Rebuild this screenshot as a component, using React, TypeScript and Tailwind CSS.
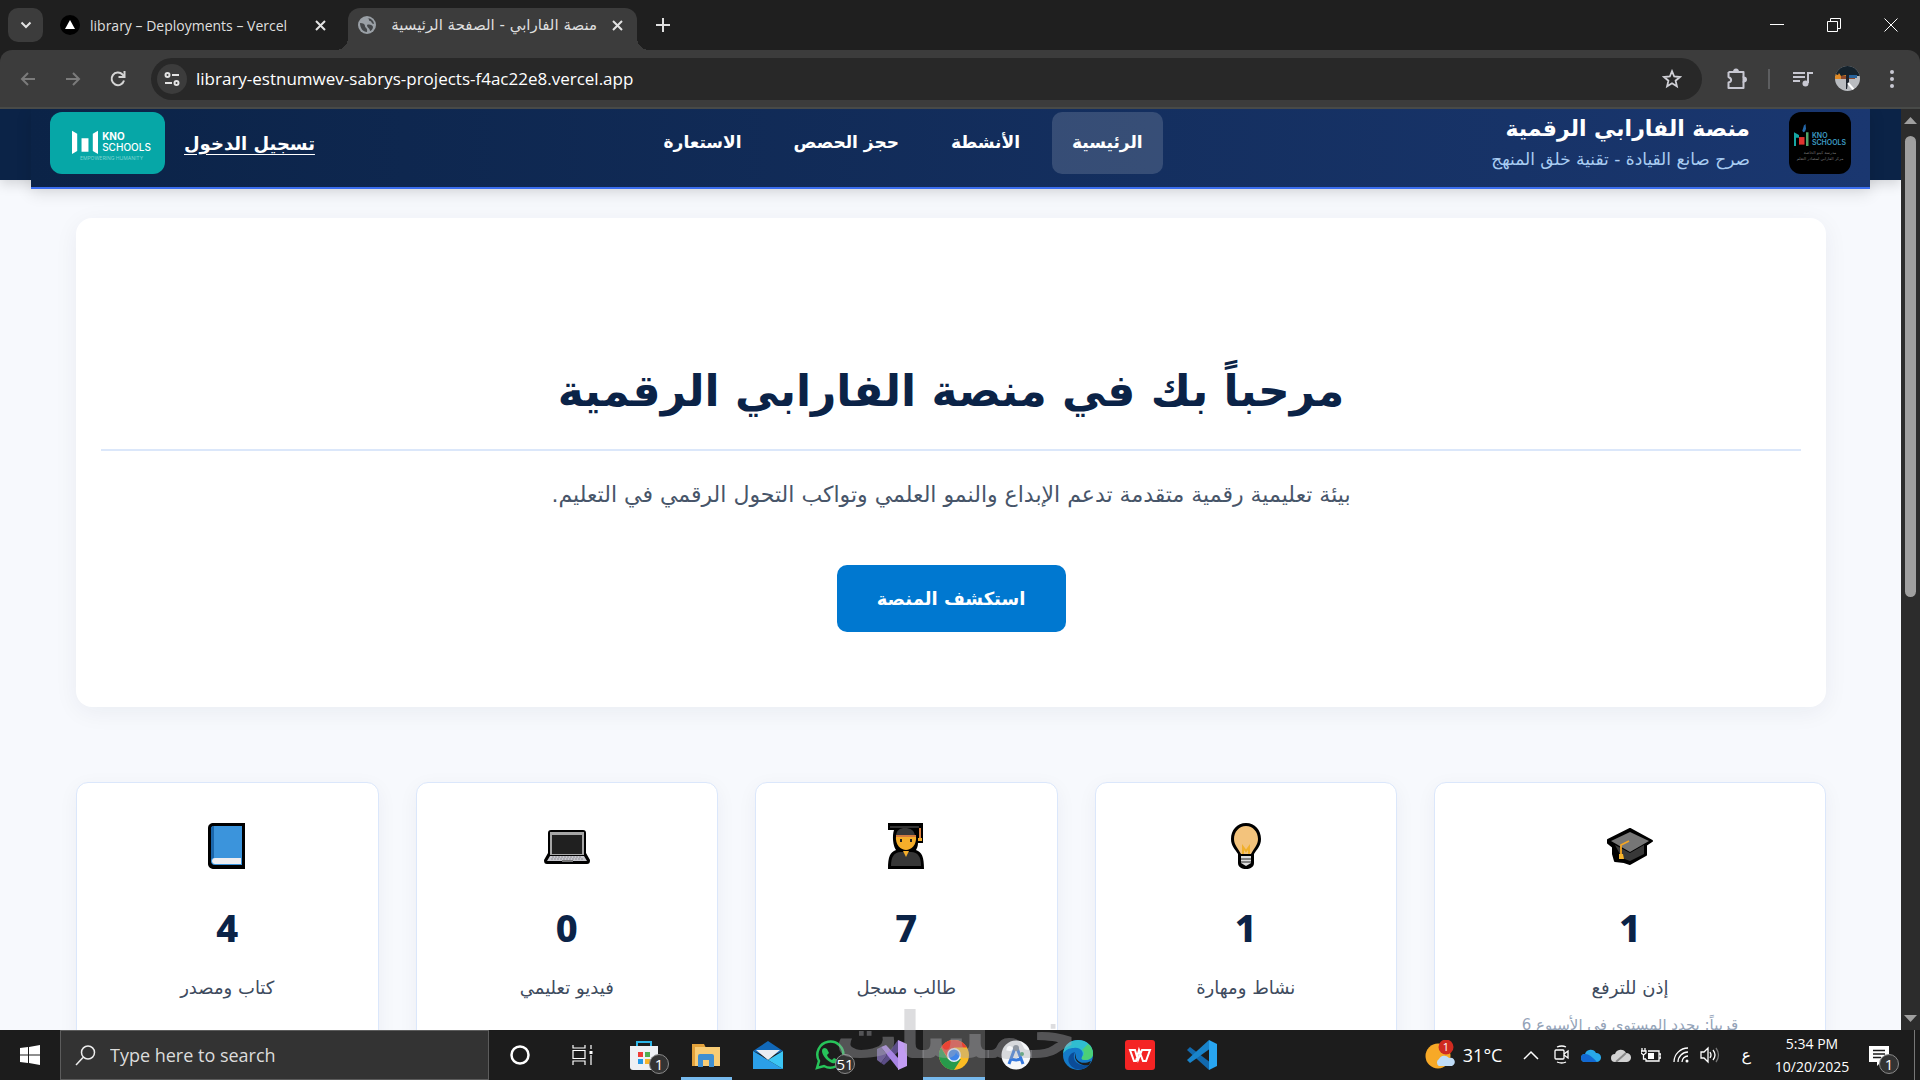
import type { ReactNode } from "react";
import clsx from "clsx";

const ui = "font-['Open_Sans','Noto_Sans',sans-serif]";

function KnoMark({ color = false }: { color?: boolean }) {
    return (
        <svg viewBox="0 0 30 32" className={color ? "h-[22px] w-[15px]" : "h-[24px] w-[26px]"} preserveAspectRatio="none" aria-hidden="true">
            {color && <path d="M17 9l3-7 3-2 1 7-2 4-4 1z" fill="#2467a9" />}
            <path d={color ? "M0 12l10 4v4H4v12H0z" : "M0 1l6 4v23l-6 4z"} fill={color ? "#16a6a3" : "#fff"} />
            <path d={color ? "M10 19h11v11H10z" : "M11 11h8v18h-8z"} fill={color ? "#e0332e" : "#fff"} />
            <path d={color ? "M24 12h5v20h-5z" : "M30 1l-6 4v23l6 4z"} fill={color ? "#51a36b" : "#fff"} />
        </svg>
    );
}

function CloseX() {
    return <svg width="11" height="11" viewBox="0 0 11 11" stroke="#e3e3e3" strokeWidth="2"><path d="M1 1l9 9M10 1l-9 9" /></svg>;
}

function TabBar() {
    return (
        <div className="flex h-[50px] shrink-0 items-start bg-[#1f1f1f] pt-2 pl-2 text-[#dfdfdf]">
            <button aria-label="Search tabs" className="grid h-[34px] w-[35px] place-items-center rounded-[10px] bg-[#3c3c3c]">
                <svg width="12" height="8" viewBox="0 0 12 8" fill="none" stroke="#e3e3e3" strokeWidth="2"><path d="M1.500 1.500L6 6l4.500-4.500" /></svg>
            </button>
            <div className="flex h-[34px] w-[305px] items-center pl-[17px]">
                <svg width="20" height="20" viewBox="0 0 20 20" className="shrink-0"><circle cx="10" cy="10" r="10" /><path d="M10 5l5 9H5z" fill="#fff" /></svg>
                <span className="ml-2.5 w-[225px] text-[14px] whitespace-nowrap">library – Deployments – Vercel</span>
                <button aria-label="Close tab"><CloseX /></button>
            </div>
            <div className="relative flex h-[42px] w-[289px] items-center rounded-t-xl bg-[#3c3c3c] px-2.5 pb-2">
                <span className="absolute bottom-0 -left-3 size-3 bg-[radial-gradient(circle_at_0_0,#1f1f1f_12px,#3c3c3c_12px)]" />
                <span className="absolute -right-3 bottom-0 size-3 bg-[radial-gradient(circle_at_100%_0,#1f1f1f_12px,#3c3c3c_12px)]" />
                <svg width="18" height="18" viewBox="0 0 18 18" className="shrink-0">
                    <circle cx="9" cy="9" r="9" fill="#9aa0a6" />
                    <path d="M2 7c3 0 5 1 5 3s3 2 2 6c-4 0-7-4-7-9zM9 2c3 0 1 3 3 3s1 3 4 3c0-3-3-6-7-6zM9 9c2-1 6 0 6 2s-2 4-3 4c0-3-3-3-3-6z" fill="#44474a" />
                </svg>
                <span dir="rtl" className="ml-5 w-[201px] text-center font-['DejaVu_Sans',sans-serif] text-[15px] whitespace-nowrap">منصة الفارابي - الصفحة الرئيسية</span>
                <button aria-label="Close tab" className="ml-auto pr-1"><CloseX /></button>
            </div>
            <button aria-label="New tab" className="mt-2.5 ml-[19px]">
                <svg width="14" height="14" viewBox="0 0 14 14" stroke="#dfdfdf" strokeWidth="2"><path d="M7 0v14M0 7h14" /></svg>
            </button>
            <div className="ml-auto flex items-center gap-[43px] pt-2.5 pr-[22px]">
                <button aria-label="Minimize"><svg width="14" height="14" viewBox="0 0 14 14" stroke="#fff"><path d="M0 6.500h14" /></svg></button>
                <button aria-label="Restore"><svg width="14" height="14" viewBox="0 0 14 14" fill="none" stroke="#fff"><path d="M.5 3.500h10v10H.5zM3.500 3V.5h10v10H11" /></svg></button>
                <button aria-label="Close"><svg width="14" height="14" viewBox="0 0 14 14" stroke="#fff"><path d="M.5.5l13 13M13.500.5l-13 13" /></svg></button>
            </div>
        </div>
    );
}

function Toolbar() {
    return (
        <div className="flex h-[59px] shrink-0 items-center rounded-t-xl border-b-2 border-[#484a48] bg-[#3c3c3c] text-[#c7c7c7]">
            <div className="flex w-[151px] shrink-0 items-center gap-[29px] pl-5">
                <button aria-label="Back"><svg width="16" height="16" viewBox="0 0 16 16" fill="none" stroke="#7b7b7b" strokeWidth="2"><path d="M15 8H2M8 2L2 8l6 6" /></svg></button>
                <button aria-label="Forward"><svg width="16" height="16" viewBox="0 0 16 16" fill="none" stroke="#7b7b7b" strokeWidth="2"><path d="M1 8h13M8 2l6 6-6 6" /></svg></button>
                <button aria-label="Reload"><svg width="16" height="16" viewBox="0 0 16 16" fill="none" stroke="#d5d5d5" strokeWidth="2"><path d="M14 9.500A6.300 6.300 0 1 1 12.500 3.500L14 5" /><path d="M14.500 0v6h-6" /></svg></button>
            </div>
            <div className="flex h-[42px] flex-1 items-center rounded-full bg-[#282828] px-1.5">
                <button aria-label="Site information" className="grid size-[30px] shrink-0 place-items-center rounded-full bg-[#3c3c3c]">
                    <svg width="16" height="14" viewBox="0 0 16 14" fill="none" stroke="#e3e3e3" strokeWidth="2"><circle cx="3.500" cy="3" r="2" /><path d="M8 3h7M1 11h7" /><circle cx="12.500" cy="11" r="2" /></svg>
                </button>
                <input aria-label="Address" readOnly value="library-estnumwev-sabrys-projects-f4ac22e8.vercel.app" className="ml-[9px] min-w-0 flex-1 bg-transparent text-[17px] text-white outline-none" />
                <button aria-label="Bookmark" className="mr-[14px]">
                    <svg width="20" height="20" viewBox="0 0 20 20" fill="none" stroke="#d0d0d6" strokeWidth="1.800"><path d="M10 2.200l2.200 5.300 5.700.5-4.300 3.700 1.300 5.600L10 14.300l-4.900 3 1.300-5.600L2.100 8l5.700-.5z" /></svg>
                </button>
            </div>
            <div className="flex shrink-0 items-center pr-[26px] pl-[24px]">
                <button aria-label="Extensions">
                    <svg width="22" height="22" viewBox="0 0 22 22" fill="none" stroke="#c8c8d2" strokeWidth="2"><path d="M2.500 4h5.500M12 4h5.500v5.500M17.500 13.500V20h-15v-5.500c3.500-1 3.500-4 0-5.500V4" strokeLinejoin="round" /><path d="M8 4a2 2.500 0 0 1 4 0zM17.500 9.500a2.500 2 0 0 1 0 4z" fill="#c8c8d2" /></svg>
                </button>
                <span className="mr-[23px] ml-[20px] h-5 w-0.5 bg-[#5d5e60]" />
                <button aria-label="Media controls">
                    <svg width="20" height="16" viewBox="0 0 20 16" fill="none" stroke="#c8c8d2" strokeWidth="2"><path d="M0 2h12M0 6h12M0 10h7M15 12V2h5" /><circle cx="12.500" cy="12.500" r="3" fill="#c8c8d2" stroke="none" /></svg>
                </button>
                <button aria-label="Profile" className="mr-[30px] ml-[22px]">
                    <svg width="25" height="25" viewBox="0 0 25 25">
                        <clipPath id="face"><circle cx="12.500" cy="12.500" r="12.500" /></clipPath>
                        <g clipPath="url(#face)">
                            <path d="M0 0h25v25H0z" fill="#b9bcc0" /><path d="M0 0h25v10H0z" fill="#14222c" />
                            <path d="M0 13V8l3 1 1-2 2 3 5-1 3 1-2 3z" fill="#e08a26" /><path d="M6 10h14v3H6z" fill="#8d4a2c" /><path d="M14 9h8v3h-8z" fill="#28649c" />
                            <path d="M11 9h3v8h-1l-1 6h-1z" fill="#1c232c" /><path d="M13 17l6 7" stroke="#fff" strokeWidth="2" />
                        </g>
                    </svg>
                </button>
                <button aria-label="Menu">
                    <svg width="4" height="18" viewBox="0 0 4 18" fill="#c8c8d2"><circle cx="2" cy="2" r="2" /><circle cx="2" cy="9" r="2" /><circle cx="2" cy="16" r="2" /></svg>
                </button>
            </div>
        </div>
    );
}

const nav = ["الرئيسية", "الأنشطة", "حجز الحصص", "الاستعارة"];

function SiteHeader() {
    return (
        <header className="relative z-10 h-[71px] bg-[#0b2347] px-[31px] shadow-[0_4px_12px_rgba(0,0,0,0.15)]">
            <div className="flex h-20 items-center justify-between border-b-2 border-[#3b6ef0] bg-linear-to-r from-[#0b2347] to-[#1a3770] px-[19px] pb-2.5 shadow-[0_4px_15px_rgba(0,0,0,0.12)]">
                <div className="flex items-center gap-[39px]">
                    <div className="flex h-[62px] w-[62px] flex-col items-center justify-center rounded-xl bg-black">
                        <div className="flex items-end gap-[3px]" dir="ltr">
                            <KnoMark color />
                            <div className="font-['Inter',sans-serif] text-[7px] leading-[7px] font-semibold text-[#3d9cc4]">KNO<br />SCHOOLS</div>
                        </div>
                        <div className="mt-1 text-center text-[4px] leading-[6px] text-[#777]">مدرسة كينو الخاصة<br />مركز الفارابي لمصادر التعلم</div>
                    </div>
                    <div>
                        <div className="text-[22px] leading-[32px] font-bold">منصة الفارابي الرقمية</div>
                        <div className="text-[17px] leading-[28px] text-[#a9cdf2]">صرح صانع القيادة - تقنية خلق المنهج</div>
                    </div>
                </div>
                <nav className="flex gap-3 text-[17px] font-bold">
                    {nav.map((item, i) => (
                        <a key={item} href="#" className={clsx("flex h-[62px] items-center rounded-[10px] px-5", i === 0 && "bg-white/15")}>{item}</a>
                    ))}
                </nav>
                <div className="flex items-center gap-[19px]">
                    <a href="#" className="text-[18px] font-bold underline underline-offset-4">تسجيل الدخول</a>
                    <div dir="ltr" className="flex h-[62px] w-[115px] flex-col items-center justify-center rounded-xl bg-[#06a7a7] pt-1.5 pl-2">
                        <div className="flex items-center gap-1">
                            <KnoMark />
                            <div className="font-['Inter',sans-serif] text-[10px] leading-[11px] font-bold">KNO<br /><span className="font-medium">SCHOOLS</span></div>
                        </div>
                        <div className="font-['Inter',sans-serif] text-[5px] leading-[8px] text-[#7ad3cf]">EMPOWERING HUMANITY</div>
                    </div>
                </div>
            </div>
        </header>
    );
}

function Cap() {
    return (
        <svg width="46" height="46" viewBox="0 0 46 46">
            <path d="M23 6L1 17v3l5 4v7l2 7 9 1 6 2 16-9V22l6-4z" stroke="#000" strokeWidth="2" strokeLinejoin="round" />
            <path d="M8 22l15 8 14-8v9l-14 7-8-3z" fill="#383838" /><path d="M23 9l19 9-19 11L4 18z" fill="#767676" />
            <path d="M22 18l-8 4v10" fill="none" stroke="#f5a623" strokeWidth="1.800" /><path d="M12 31h4l1 5h-5z" fill="#f7b52c" />
        </svg>
    );
}

function Bulb() {
    return (
        <svg width="46" height="46" viewBox="0 0 46 46">
            <path d="M23 0c-9 0-15 7-15 16 0 7 4 10 7 15v9c0 4 4 6 8 6s8-2 8-6v-9c3-5 7-8 7-15C38 7 32 0 23 0z" />
            <path d="M23 3c-7 0-12 6-12 13 0 6 4 9 7 15h10c3-6 7-9 7-15C35 9 30 3 23 3z" fill="#f3c37c" />
            <path d="M20 31v-7l3 4 3-4v7" fill="none" stroke="#f0b02c" strokeWidth="2" /><path d="M18 33h10v7l-5 3-5-3z" fill="#ddd" /><path d="M18 36h10M18 39h10" stroke="#222" />
        </svg>
    );
}

function Graduate() {
    return (
        <svg width="46" height="46" viewBox="0 0 46 46">
            <path d="M5 0h35v20h-5c0 3-1 5-2 7 6 2 8 7 8 19H5c0-12 2-17 8-19-3-4-4-14-2-20H5z" />
            <path d="M7 3h29v2H7z" fill="#333" /><path d="M13 14c0-7 4-9 9-9s10 2 10 9z" fill="#383838" />
            <path d="M13 13h20c1 9-5 14-10 14s-11-5-10-14z" fill="#f5ae2a" /><path d="M13 13h20" stroke="#d27a40" strokeWidth="2" />
            <path d="M18 16v3M28 16v3" stroke="#222" strokeWidth="2" /><path d="M8 43c0-9 3-14 10-14h10c7 0 10 5 10 14z" fill="#363636" />
            <path d="M20 28h6l-3 6z" fill="#f5ae2a" /><path d="M37 5v12" stroke="#e0813e" strokeWidth="2" /><path d="M35 15h4v3h-4z" fill="#f5ae2a" />
        </svg>
    );
}

function Laptop() {
    return (
        <svg width="46" height="46" viewBox="0 0 46 46">
            <path d="M7 7h32c2 0 3 1 3 3v20l4 7c0 3-1 4-3 4H3c-2 0-3-1-3-4l4-7V10c0-2 1-3 3-3z" />
            <path d="M6 9h34v23H6z" fill="#a6a6a6" /><path d="M8 12h30v19H8z" fill="#202020" />
            <path d="M6 33h34l3 5H3z" fill="#c7c7cd" /><path d="M8 34h30M7 36h32" stroke="#8e8e95" strokeDasharray="2 1" /><path d="M18 38h11" stroke="#777" strokeWidth="2" />
        </svg>
    );
}

function Book() {
    return (
        <svg width="46" height="46" viewBox="0 0 46 46">
            <path d="M10 0h31v46H10c-3 0-6-2-6-5V5c0-3 2-5 6-5z" /><path d="M10 3h28v39H11c-3 0-4-2-4-4V6c0-2 1-3 3-3z" fill="#3b94dc" />
            <path d="M10 3v32c-2 0-3 1-3 3V6c0-2 1-3 3-3z" fill="#1b66ab" /><path d="M11 35h26v6H11c-4 0-4-6 0-6z" fill="#ededf0" />
        </svg>
    );
}

const stats: { icon: ReactNode; value: string; label: string; note?: string }[] = [
    { icon: <Cap />, value: "1", label: "إذن للترفع", note: "قريباً: يحدد المستوى في الأسبوع 6" },
    { icon: <Bulb />, value: "1", label: "نشاط ومهارة" },
    { icon: <Graduate />, value: "7", label: "طالب مسجل" },
    { icon: <Laptop />, value: "0", label: "فيديو تعليمي" },
    { icon: <Book />, value: "4", label: "كتاب ومصدر" },
];

function SitePage() {
    return (
        <div dir="rtl" className="min-w-0 flex-1 overflow-hidden bg-[#f7f9fd] font-['DejaVu_Sans',sans-serif] text-white">
            <SiteHeader />
            <main className="pt-[38px] pr-[75px] pl-[76px]">
                <section className="rounded-2xl bg-white px-[25px] pt-[130px] pb-[75px] text-center shadow-[0_5px_25px_rgba(10,35,71,0.06)]">
                    <h1 className="h-[103px] border-b-2 border-[#dbe7fa] text-[44px] leading-[86px] font-bold text-[#0b2347]">مرحباً بك في منصة الفارابي الرقمية</h1>
                    <p className="mt-6 text-[22px] leading-[40px] text-[#475569]">بيئة تعليمية رقمية متقدمة تدعم الإبداع والنمو العلمي وتواكب التحول الرقمي في التعليم.</p>
                    <button className="mt-[50px] h-[67px] w-[229px] rounded-[10px] bg-[#0078d0] text-[18px] font-bold">استكشف المنصة</button>
                </section>
                <section className="mt-[75px] grid grid-cols-[392px_repeat(4,minmax(0,1fr))] gap-[37px]">
                    {stats.map((s) => (
                        <article key={s.label} className="flex h-[320px] flex-col items-center rounded-xl border border-[#dbe7fb] bg-white pt-10 text-center shadow-[0_5px_20px_rgba(10,35,71,0.05)]">
                            {s.icon}
                            <div className="mt-7 font-['Noto_Sans',sans-serif] text-[38px] leading-[60px] font-extrabold text-[#0b2347]">{s.value}</div>
                            <div className="mt-4 text-[18px] leading-[30px] text-[#3e4b5e]">{s.label}</div>
                            {s.note && <div className="mt-2 text-[15px] leading-[28px] text-[#94a3b8]">{s.note}</div>}
                        </article>
                    ))}
                </section>
            </main>
        </div>
    );
}

function Scrollbar() {
    return (
        <div className="flex w-[19px] shrink-0 flex-col items-center bg-[#2c2c2c] py-[7px]">
            <svg width="13" height="8" viewBox="0 0 13 8" fill="#9f9f9f"><path d="M0 8l6.500-7L13 8z" /></svg>
            <div className="mt-3 h-[461px] w-[11px] rounded-full bg-[#9f9f9f]" />
            <svg width="13" height="8" viewBox="0 0 13 8" fill="#9f9f9f" className="mt-auto"><path d="M0 0l6.500 7L13 0z" /></svg>
        </div>
    );
}

const apps: { name: string; open?: boolean; active?: boolean; badge?: string; icon: ReactNode }[] = [
    { name: "Cortana", icon: <svg width="20" height="20" viewBox="0 0 20 20"><circle cx="10" cy="10" r="8.500" fill="none" stroke="#fff" strokeWidth="2.500" /></svg> },
    { name: "Task view", icon: <svg width="21" height="20" viewBox="0 0 21 20" fill="none" stroke="#fff" strokeWidth="1.200"><path d="M1 0v3h12V0M1 20v-4h12v4M1 5.500h12v8H1zM19 0v4M19 10v10" /><path d="M17.500 6h3v3h-3z" fill="#fff" stroke="none" /></svg> },
    {
        name: "Microsoft Store", badge: "1", icon: <svg width="30" height="30" viewBox="0 0 30 30"><path d="M8 7V2h14v5" fill="none" stroke="#2cb5e8" strokeWidth="2" /><path d="M1 6h28v21q0 3-3 3H4q-3 0-3-3z" fill="#eef0f4" /><path d="M9 12h5v5H9z" fill="#ef3b36" /><path d="M16 12h5v5h-5z" fill="#51ae50" /><path d="M9 19h5v5H9z" fill="#2298e8" /><path d="M16 19h5v5h-5z" fill="#f6b42a" /></svg>,
    },
    {
        name: "File Explorer", open: true, icon: <svg width="28" height="26" viewBox="0 0 28 26"><path d="M0 2h12l2 4h14v18H0z" fill="#e3a23b" /><path d="M3 5h25v19H3z" fill="#f8cc75" /><path d="M6 14q0-2 2-2h12q2 0 2 2v11h-5v-7h-6v7H6z" fill="#3f8fd2" /></svg>,
    },
    { name: "Mail", icon: <svg width="30" height="28" viewBox="0 0 30 28"><path d="M0 10L15 0l15 10-15 6z" fill="#1168b8" /><path d="M3 9h24L15 19z" fill="#e9edf2" /><path d="M0 10l30 18H0z" fill="#2b9fe8" /><path d="M30 10v18L15 19z" fill="#3bc5f4" /></svg> },
    {
        name: "WhatsApp", badge: "51", icon: <svg width="30" height="30" viewBox="0 0 30 30"><path d="M2 28l2-7A13 13 0 1 1 9 26z" fill="none" stroke="#27c45a" strokeWidth="2.500" /><path d="M10 8l2 1 2 4-2 2c1 3 3 4 5 5l2-2 4 2c0 4-5 4-8 2-5-3-8-8-8-11 0-2 1-3 3-3z" fill="#27c45a" /></svg>,
    },
    { name: "Visual Studio", icon: <svg width="30" height="30" viewBox="0 0 30 30"><path d="M0 9l4-2 6 8-6 8-4-3z" fill="#6f6196" /><path d="M4 23L21 0v12L7 25z" fill="#5b4d86" /><path d="M4 7l5-2 13 14v11z" fill="#a884e4" /><path d="M21 0l9 4v22l-9 4z" fill="#c29cf3" /></svg> },
    {
        name: "Chrome", active: true, icon: <svg width="30" height="30" viewBox="0 0 30 30"><circle cx="15" cy="15" r="15" fill="#fbbc23" /><path d="M2 7.500A15 15 0 0 1 28 7.500H15L9 18z" fill="#ea4335" /><path d="M2 7.500A15 15 0 0 0 15 30l7-11H9z" fill="#279a4b" /><circle cx="15" cy="15" r="7" fill="#e5f0fb" /><circle cx="15" cy="15" r="5.500" fill="#3f86ea" /></svg>,
    },
    { name: "Android Studio", icon: <svg width="30" height="30" viewBox="0 0 30 30"><circle cx="15" cy="15" r="14.500" fill="#f6f8fa" /><path d="M14 8L8 24M16 8l6 16M9 18q6 4 12 0" fill="none" stroke="#3478de" strokeWidth="3" /><circle cx="15" cy="8" r="3" fill="#7e8b98" /><circle cx="21" cy="14" r="2" fill="#42a66b" /></svg> },
    { name: "Edge", icon: <svg width="30" height="30" viewBox="0 0 30 30"><circle cx="15" cy="15" r="15" fill="#147ac9" /><path d="M0 14C1 3 9 0 15 0c9 0 15 6 15 13 0 5-4 7-8 7-3 0-4-1-3-3 3-5-2-10-8-9C6 8 2 10 0 14z" fill="#30bed0" /><path d="M25 4c4 3 5 7 5 10 0 4-4 6-8 6-3 0-4-1-3-3 3-3 2-6 0-7z" fill="#4bd078" /><path d="M12 12c-4 7 2 15 14 13-8 8-17 4-20-2-2-5 1-10 6-11z" fill="#0b4c98" /><path d="M13 13c-2 7 5 13 15 8l-2 4C18 27 9 20 13 13z" fill="#1c1c1c" /></svg> },
    { name: "WPS Office", icon: <svg width="30" height="30" viewBox="0 0 30 30"><rect width="30" height="30" rx="3" fill="#f42424" /><path d="M5 10h5l3 10 4-10h8l-4 11h-3l-4-11-3 11h-2z" fill="none" stroke="#fff" strokeWidth="2" /></svg> },
    { name: "Visual Studio Code", icon: <svg width="30" height="30" viewBox="0 0 30 30"><path d="M0 10l3-3 21 16-2 7z" fill="#1269ad" /><path d="M0 20L22 0l2 8L3 23z" fill="#1984cb" /><path d="M22 0l8 4v22l-8 4z" fill="#28a5f1" /></svg> },
];

const badge = "absolute grid size-5 place-items-center rounded-full border border-[#8a8a8a] bg-[#333] text-[15px] leading-none text-white";

function Taskbar() {
    return (
        <footer className="flex h-[50px] shrink-0 items-stretch bg-[#1c1c1c] text-white">
            <button aria-label="Start" className="grid w-[60px] shrink-0 place-items-center">
                <svg width="20" height="20" viewBox="0 0 20 20" fill="#fff"><path d="M0 3l8-1v7.500H0zM9 2l11-2v9.500H9zM0 10.500h8V18l-8-1zM9 10.500h11V20L9 18z" /></svg>
            </button>
            <label className="flex w-[429px] shrink-0 items-center border border-[#5c5c5c] bg-[#333] pl-3.5">
                <svg width="21" height="21" viewBox="0 0 21 21" fill="none" stroke="#eee" strokeWidth="1.500" className="shrink-0"><circle cx="13" cy="7.500" r="6.500" /><path d="M8 12.500L1 20" /></svg>
                <input aria-label="Search" placeholder="Type here to search" className="ml-3.5 w-full bg-transparent text-[18px] outline-none placeholder:text-[#dcdcdc]" />
            </label>
            <div className="flex shrink-0">
                {apps.map((a) => (
                    <button key={a.name} aria-label={a.name} className={clsx("relative grid w-[62px] place-items-center", a.active && "bg-[#464646]")}>
                        {a.icon}
                        {a.badge && <span className={clsx(badge, "right-1.5 bottom-1.5")}>{a.badge}</span>}
                        {a.open && <span className="absolute bottom-0 h-[3px] w-[51px] bg-[#76b9ed]" />}
                        {a.active && <span className="absolute bottom-0 h-[3px] w-full bg-[#76b9ed]" />}
                    </button>
                ))}
            </div>
            <div className="ml-auto flex items-center">
                <div className="relative flex items-center gap-2 text-[18px]">
                    <svg width="30" height="30" viewBox="0 0 30 30"><circle cx="13" cy="16" r="12.500" fill="#f7a927" /><path d="M14 26a4 4 0 0 1 0-7 6 6 0 0 1 10-1 4 4 0 0 1 3 8z" fill="#bfdcf7" /><circle cx="21" cy="7" r="7.500" fill="#cf2b20" /><text x="21" y="11" fill="#fff" fontSize="11" textAnchor="middle">1</text></svg>
                    31°C
                </div>
                <svg className="ml-[21px]" width="16" height="10" viewBox="0 0 16 10" fill="none" stroke="#fff" strokeWidth="1.500"><path d="M1 9l7-7 7 7" /></svg>
                <svg className="ml-[15px]" width="16" height="20" viewBox="0 0 16 20" fill="none" stroke="#fff" strokeWidth="1.300"><rect x="1" y="5" width="9" height="9" rx="1" /><path d="M10 9l4-3v7l-4-3M3 2q5-2 9 0M3 17q5 2 9 0" /></svg>
                <svg className="ml-[11px]" width="20" height="14" viewBox="0 0 20 14"><path d="M4 14a4 4 0 0 1 0-8 6 6 0 0 1 11-1 4 4 0 0 1 1 9z" fill="#28a8ea" /><path d="M4 14a4 4 0 0 1 0-8q4-1 12 8z" fill="#1269d3" /></svg>
                <svg className="ml-2.5" width="20" height="14" viewBox="0 0 20 14"><path d="M4 14a4 4 0 0 1 0-8 6 6 0 0 1 11-1 4 4 0 0 1 1 9z" fill="#d2d2d2" /><path d="M5 14l10-9" stroke="#888" strokeWidth="2" /></svg>
                <svg className="ml-2.5" width="20" height="14" viewBox="0 0 20 14" fill="none" stroke="#fff" strokeWidth="1.300"><path d="M7 3h11v10H5v-2M18 6h2v4h-2M1 0v3M4 0v3M0 3h5v2L2.500 7 0 5zM2.500 7v4H5" /><path d="M7 5h6v6H7z" fill="#fff" stroke="none" /></svg>
                <svg className="ml-3" width="16" height="16" viewBox="0 0 16 16" fill="none" stroke="#fff" strokeWidth="1.300"><path d="M1 15A14 14 0 0 1 15 1M5 15A10 10 0 0 1 15 5M9 15a6 6 0 0 1 6-6" /><circle cx="14" cy="14" r="1.500" fill="#fff" stroke="none" /></svg>
                <svg className="ml-[11px]" width="20" height="18" viewBox="0 0 20 18" fill="none" stroke="#fff" strokeWidth="1.300"><path d="M1 6h3l4-4v14l-4-4H1zM10 6q2 3 0 6M13 4q4 5 0 10" /><path d="M16 2q5 7 0 14" stroke="#777" /></svg>
                <span className="ml-[21px] font-['DejaVu_Sans',sans-serif] text-[16px]">ع</span>
                <div className="ml-[20px] w-[82px] text-center text-[14px] leading-[23px] whitespace-nowrap">5:34 PM<br />10/20/2025</div>
                <button aria-label="Notifications" className="relative ml-4 h-[50px] w-[34px]">
                    <svg width="20" height="20" viewBox="0 0 20 20" className="mt-0.5"><path d="M0 0h20v16h-8l-4 4v-4H0z" fill="#fff" /><path d="M4 4.500h12M4 8h12M4 11.500h8" stroke="#1c1c1c" strokeWidth="1.500" /></svg>
                    <span className={clsx(badge, "right-1 bottom-1.5")}>1</span>
                </button>
                <span className="mr-[5px] ml-[11px] h-[50px] w-px bg-[#777]" />
            </div>
        </footer>
    );
}

export default function App() {
    return (
        <div className={clsx("relative flex h-screen flex-col overflow-hidden", ui)}>
            <TabBar />
            <div className="flex shrink-0 flex-col bg-[#1f1f1f]"><Toolbar /></div>
            <div className="flex min-h-0 flex-1">
                <SitePage />
                <Scrollbar />
            </div>
            <Taskbar />
            <div className="pointer-events-none absolute inset-x-0 bottom-1 flex justify-center pr-2">
                <span dir="rtl" className="font-['DejaVu_Sans',sans-serif] text-[64px] leading-[80px] font-bold text-[#aaaaaf]/40">خمسات</span>
            </div>
        </div>
    );
}
